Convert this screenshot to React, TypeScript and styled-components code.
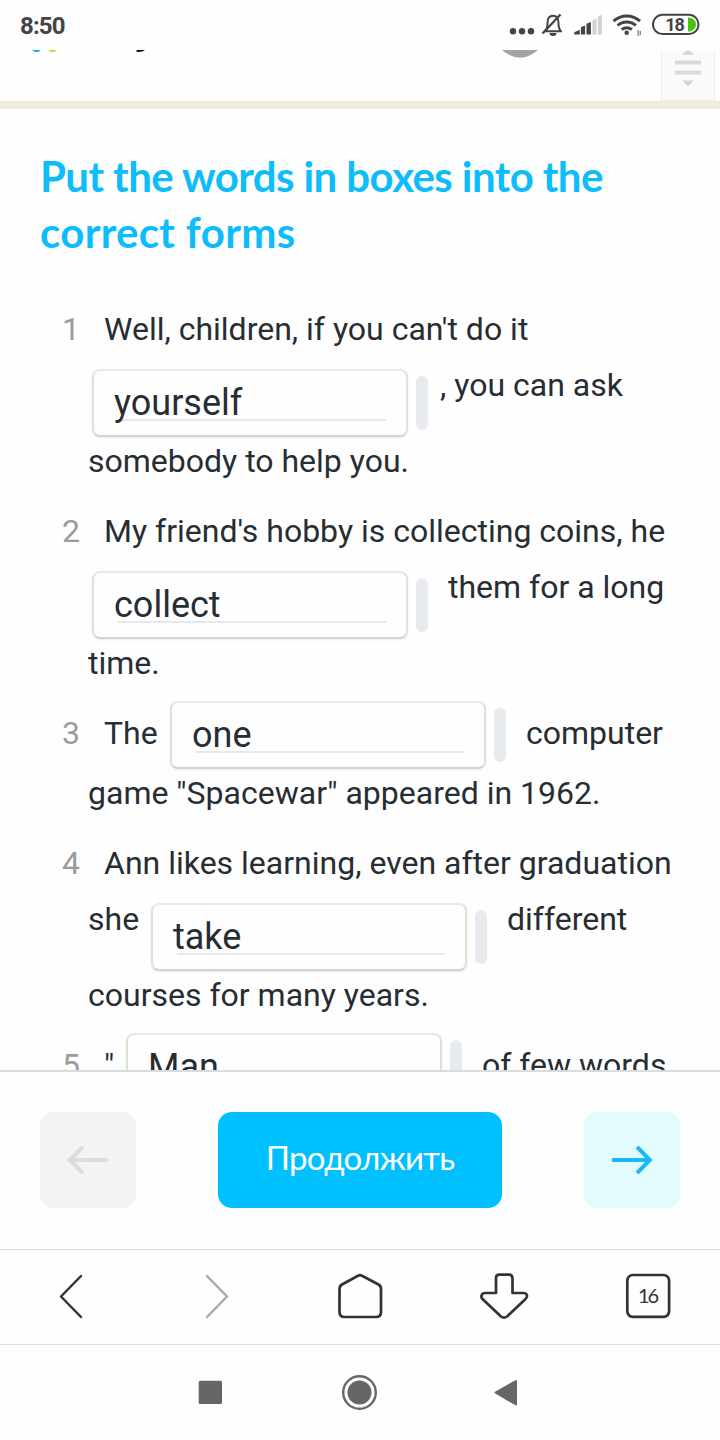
import React from "react";
import styled, { createGlobalStyle } from "styled-components";

const Global = createGlobalStyle`
  * { box-sizing: border-box; }
  body { margin: 0; background: #fff; font-family: Roboto, sans-serif; color: #262d33; }
  svg { display: block; flex: none; }
`;

const Screen = styled.div`
  width: 720px;
  height: 1440px;
  display: flex;
  flex-direction: column;
  overflow: hidden;
  background: #fefefe;
`;

const StatusBar = styled.div`
  height: 50px;
  flex: none;
  display: flex;
  justify-content: space-between;
  padding-left: 20px;
`;

const Clock = styled.span`
  font-size: 24px;
  line-height: 52px;
  font-weight: 700;
  color: #444;
  letter-spacing: -0.85px;
`;

const Header = styled.div`
  height: 59px;
  flex: none;
  border-bottom: 8px solid #f0ecd9;
  display: flex;
  justify-content: space-between;
  padding-right: 5px;
`;

const ScrollHandle = styled.div`
  width: 54px;
  height: 51px;
  border: 1px solid #efefef;
  border-top: 0;
  background: #fafafa;
`;

const Content = styled.main`
  height: 961px;
  flex: none;
  overflow: hidden;
  padding: 39px 0 0 40px;
`;

const Title = styled.h1`
  margin: 0 0 39px;
  font-family: Lato, sans-serif;
  font-size: 42px;
  line-height: 56px;
  font-weight: 700;
  color: #0dbcfa;
  white-space: nowrap;
`;

const TitleLine = styled.span<{ $spacing: number }>`
  display: block;
  letter-spacing: ${(p) => p.$spacing}px;
`;

const Item = styled.section`
  display: grid;
  grid-template-columns: 48px 1fr;
  margin-bottom: 10px;
`;

const Num = styled.span`
  padding-left: 22px;
  font-size: 32px;
  line-height: 60px;
  color: #989ca0;
`;

const Lines = styled.div`
  display: flex;
  flex-direction: column;
`;

const Line = styled.div<{ $tall?: boolean; $indent?: boolean }>`
  display: flex;
  align-items: flex-start;
  height: ${(p) => (p.$tall ? 72 : 60)}px;
  padding-left: ${(p) => (p.$indent ? 16 : 0)}px;
`;

const Words = styled.span<{ $raised?: boolean; $width?: number }>`
  font-size: 32px;
  line-height: 60px;
  white-space: nowrap;
  margin-top: ${(p) => (p.$raised ? -4 : 0)}px;
  width: ${(p) => (p.$width ? `${p.$width}px` : "auto")};
`;

const Field = styled.div<{ $tall?: boolean }>`
  flex: none;
  width: 316px;
  height: 68px;
  margin-top: ${(p) => (p.$tall ? 10 : -2)}px;
  margin-left: 4px;
  border: 2px solid #dbe5d6;
  border-top-color: #e6e9ea;
  border-bottom-color: #d0d5d1;
  border-radius: 8px;
  box-shadow: 0 1px 2px rgba(0, 0, 0, 0.08);
  padding: 9px 20px 0;
  display: grid;
`;

const FieldText = styled.span`
  grid-area: 1 / 1;
  font-size: 36px;
  line-height: 46px;
  white-space: nowrap;
`;

const Underline = styled.div`
  grid-area: 1 / 1;
  height: 41px;
  margin-left: 4px;
  border-bottom: 2px solid #e6e8e9;
`;

const Grip = styled.div<{ $tall?: boolean; $after: number }>`
  flex: none;
  width: 12px;
  height: 54px;
  margin: ${(p) => (p.$tall ? 17 : 5)}px ${(p) => p.$after}px 0 8px;
  border-radius: 6px;
  background: #e8ebee;
`;

const Actions = styled.footer`
  height: 179px;
  flex: none;
  display: flex;
  justify-content: space-between;
  padding: 40px 40px 0;
  border-top: 2px solid #d9dcdd;
`;

const ArrowButton = styled.button<{ $active?: boolean }>`
  width: 96px;
  height: 96px;
  padding: 0;
  border: 0;
  border-radius: 14px;
  display: grid;
  place-items: center;
  color: ${(p) => (p.$active ? "#18b9f4" : "#dcdcdc")};
  background: ${(p) => (p.$active ? "#e2fbfd" : "#f3f3f3")};
`;

const ContinueButton = styled.button`
  width: 284px;
  height: 96px;
  padding: 0 0 7px;
  border: 0;
  border-radius: 14px;
  background: #00c0ff;
  color: #fff;
  font-family: Lato, sans-serif;
  font-size: 33px;
  letter-spacing: -0.7px;
`;

const BrowserBar = styled.nav`
  height: 95px;
  flex: none;
  border-top: 1px solid #dedede;
  display: grid;
  grid-template-columns: repeat(5, 1fr);
`;

const SystemBar = styled.nav`
  height: 96px;
  flex: none;
  border-top: 1px solid #dedede;
  display: flex;
`;

const TabIcon = styled.div`
  display: grid;
  svg, span { grid-area: 1 / 1; }
`;

const TabCount = styled.span`
  font-family: Lato, sans-serif;
  font-size: 20px;
  line-height: 91px;
  letter-spacing: -2px;
  text-indent: -1px;
  text-align: center;
  color: #333;
`;

type FieldProps = { value: string; tall?: boolean; after: number };

const Answer = ({ value, tall, after }: FieldProps) => (
  <>
    <Field $tall={tall}>
      <Underline />
      <FieldText>{value}</FieldText>
    </Field>
    <Grip $tall={tall} $after={after} />
  </>
);

const StatusIcons = () => (
  <svg width="220" height="50" viewBox="500 0 220 50" fill="none">
    <g fill="#444">
      <circle cx="513" cy="31.3" r="3.2" />
      <circle cx="522" cy="31.3" r="3.2" />
      <circle cx="531" cy="31.3" r="3.2" />
    </g>
    <g stroke="#444" strokeWidth="2">
      <path d="M544 31.2h18M545.5 30.5c2-2 2-4 2-7.500c0-5 2.500-7.200 5.500-7.200s5.500 2.200 5.500 7.200c0 3.500 0 5.500 2 7.500" />
      <path d="M542.500 33.500L560.500 14.500" strokeWidth="2.300" />
    </g>
    <path d="M549.500 33h7a3.500 3 0 0 1-7 0z" fill="#444" />
    <path d="M574.300 34.500v-2.300l5.500-2.400v4.700zM580.900 27.300l4.200-1.700v8.900h-4.200zM586.500 23.800l4.400-1.800v12.500h-4.400z" fill="#444" />
    <path d="M592.400 20.200l4.200-1.800v16.100h-4.200zM598 16.500l3.900-1.700v19.700h-3.900z" fill="#d2d2d2" />
    <g stroke="#444" strokeWidth="3">
      <path d="M613.500 21.200a19.500 19.500 0 0 1 26.500 0" />
      <path d="M617.600 25.500a13.500 13.500 0 0 1 18.300 0" />
      <path d="M621.700 29.600a7.600 7.600 0 0 1 10.100 0" />
    </g>
    <circle cx="626.700" cy="32.800" r="2.300" fill="#444" />
    <path d="M638.200 30v6M640.300 31v4" stroke="#777" strokeWidth="1.200" />
    <rect x="653" y="14.800" width="45.500" height="19.200" rx="9.600" stroke="#444" strokeWidth="2" />
    <path d="M688 17.500h1.500q6.500 1.500 6.500 7t-6.500 7h-1.500z" fill="#46c70e" />
    <text x="674.500" y="31" textAnchor="middle" fontFamily="Roboto, sans-serif" fontSize="18" fontWeight="700" fill="#444" letterSpacing="-1.2">18</text>
  </svg>
);

const Arrow = ({ flip }: { flip?: boolean }) => (
  <svg width="42" height="32" viewBox="0 0 42 32" fill="none" stroke="currentColor" strokeWidth="3.900">
    {flip ? <path d="M41 16H3M16 3L3 16L16 29" /> : <path d="M1 16H39M26 3L39 16L26 29" />}
  </svg>
);

export default function App() {
  return (
    <>
      <Global />
      <Screen>
        <StatusBar>
          <Clock>8:50</Clock>
          <StatusIcons />
        </StatusBar>
        <Header>
          <svg width="560" height="51" viewBox="0 50 560 51">
            <path d="M32 50h9q-4.500 4.500-9 0z" fill="#16b5dc" />
            <path d="M48 50h9q-4.500 4.500-9 0z" fill="#d6dc2b" />
            <path d="M136.500 50h8.500q-3 2.500-8.500 1.800z" fill="#111" />
            <path d="M502 50h36q-18 15.500-36 0z" fill="#a3a3a3" />
          </svg>
          <ScrollHandle>
            <svg width="52" height="50" viewBox="662 50 52 50">
              <path d="M682.500 55q5.500-9 11 0z" fill="#d5d5d5" />
              <path d="M675 60.500h26v4h-26zM675 70.500h26v4h-26z" fill="#dadada" />
              <path d="M682.500 80.500h11l-5.500 6z" fill="#d5d5d5" />
            </svg>
          </ScrollHandle>
        </Header>
        <Content>
          <Title>
            <TitleLine $spacing={-0.58}>Put the words in boxes into the</TitleLine>
            <TitleLine $spacing={0.33}>correct forms</TitleLine>
          </Title>
          <Item>
            <Num>1</Num>
            <Lines>
              <Line $indent><Words>Well, children, if you can't do it</Words></Line>
              <Line $tall>
                <Answer value="yourself" tall after={12} />
                <Words $raised>, you can ask</Words>
              </Line>
              <Line><Words>somebody to help you.</Words></Line>
            </Lines>
          </Item>
          <Item>
            <Num>2</Num>
            <Lines>
              <Line $indent><Words>My friend's hobby is collecting coins, he</Words></Line>
              <Line $tall>
                <Answer value="collect" tall after={20} />
                <Words $raised>them for a long</Words>
              </Line>
              <Line><Words>time.</Words></Line>
            </Lines>
          </Item>
          <Item>
            <Num>3</Num>
            <Lines>
              <Line $indent>
                <Words $width={62}>The</Words>
                <Answer value="one" after={20} />
                <Words>computer</Words>
              </Line>
              <Line><Words>game "Spacewar" appeared in 1962.</Words></Line>
            </Lines>
          </Item>
          <Item>
            <Num>4</Num>
            <Lines>
              <Line $indent><Words>Ann likes learning, even after graduation</Words></Line>
              <Line $tall>
                <Words $raised $width={59}>she</Words>
                <Answer value="take" tall after={20} />
                <Words $raised>different</Words>
              </Line>
              <Line><Words>courses for many years.</Words></Line>
            </Lines>
          </Item>
          <Item>
            <Num>5</Num>
            <Lines>
              <Line $indent>
                <Words $width={18}>"</Words>
                <Answer value="Man" after={20} />
                <Words>of few words</Words>
              </Line>
            </Lines>
          </Item>
        </Content>
        <Actions>
          <ArrowButton><Arrow flip /></ArrowButton>
          <ContinueButton>Продолжить</ContinueButton>
          <ArrowButton $active><Arrow /></ArrowButton>
        </Actions>
        <BrowserBar>
          <svg width="144" height="94" viewBox="0 1250 144 94" fill="none" stroke="#333" strokeWidth="2.500" strokeLinecap="round" strokeLinejoin="round">
            <path d="M81 1276L61 1296.500L81 1317" />
          </svg>
          <svg width="144" height="94" viewBox="144 1250 144 94" fill="none" stroke="#aaa" strokeWidth="2.500" strokeLinecap="round" strokeLinejoin="round">
            <path d="M207 1276L227 1296.500L207 1317" />
          </svg>
          <svg width="144" height="94" viewBox="288 1250 144 94" fill="none" stroke="#333" strokeWidth="2.700" strokeLinejoin="round">
            <path d="M358 1275.700q2-1 4 0L378.500 1284.500q2.500 1.500 2.500 4.500V1312q0 5-5 5H344.500q-5 0-5-5V1289q0-3 2.500-4.500z" />
          </svg>
          <svg width="144" height="94" viewBox="432 1250 144 94" fill="none" stroke="#333" strokeWidth="2.700" strokeLinejoin="round">
            <path d="M496 1293V1278q0-3.300 3.300-3.300h9.400q3.800 0 3.800 3.800V1293h11q3 0 3.500 2.500q.3 1.800-2 4L507 1316.500q-3 2.300-6 0L483 1299.500q-2.300-2.200-1.300-4.500q.8-2 3.300-2z" />
          </svg>
          <TabIcon>
            <svg width="144" height="94" viewBox="576 1250 144 94" fill="none" stroke="#333" strokeWidth="2.700">
              <rect x="627.300" y="1275" width="41.800" height="41.800" rx="5.500" />
            </svg>
            <TabCount>16</TabCount>
          </TabIcon>
        </BrowserBar>
        <SystemBar>
          <svg width="720" height="95" viewBox="0 1345 720 95" fill="#666">
            <rect x="198.700" y="1380.700" width="23.300" height="23.300" rx="1.500" />
            <circle cx="359.500" cy="1392.500" r="12" />
            <circle cx="359.500" cy="1392.500" r="16.300" fill="none" stroke="#666" strokeWidth="2.400" />
            <path d="M495.500 1392.500L516 1381V1404.500z" stroke="#666" strokeWidth="2" strokeLinejoin="round" />
          </svg>
        </SystemBar>
      </Screen>
    </>
  );
}
